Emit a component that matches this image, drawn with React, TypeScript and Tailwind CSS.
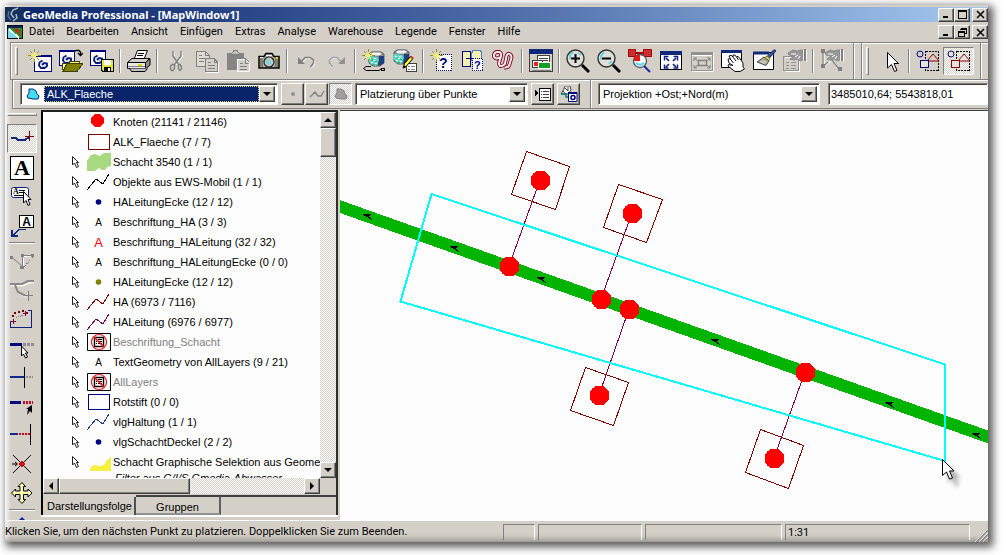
import React, { ReactNode } from "react";

const dither =
  "bg-[repeating-conic-gradient(#ffffff_0_25%,#d4d0c8_0_50%)] bg-[length:2px_2px]";
const raised =
  "border border-t-white border-l-white border-r-[#404040] border-b-[#404040] shadow-[inset_-1px_-1px_0_#808080]";
const sunken =
  "border border-t-[#808080] border-l-[#808080] border-r-white border-b-white shadow-[inset_1px_1px_0_#404040]";
const pushed = "border border-t-[#808080] border-l-[#808080] border-r-white border-b-white";

/* ---------- shared icon parts ---------- */

function Icon({ children, size = 24 }: { children: ReactNode; size?: number }) {
  return (
    <svg width={size} height={size} viewBox="0 0 24 24" fill="none" shapeRendering="crispEdges" aria-hidden="true">
      {children}
    </svg>
  );
}

function Swirl({ x, y }: { x: number; y: number }) {
  return (
    <g transform={`translate(${x} ${y})`} fill="none" shapeRendering="auto">
      <path d="M4.500 .5L1.500 2.500L1 5.500L3 8L6.500 8L9 6V3.500L6 3L4 5" stroke="#0a1a80" strokeWidth="1.900" />
      <path d="M2.500 2L4 4M5 6L7.500 6" stroke="#a0c8f0" strokeWidth=".9" />
    </g>
  );
}

function Star({ x, y }: { x: number; y: number }) {
  return (
    <g transform={`translate(${x} ${y})`}>
      <path d="M6.500 0V4M6.500 9V13M0 6.500H4M9 6.500H13M2 2L4 4M9 9L11 11M11 2L9 4M4 9L2 11" stroke="#909030" />
      <path d="M6.500 3V10M3 6.500H10M4 4L9 9M9 4L4 9" stroke="#f8f050" />
      <path d="M6 6h1v1h-1z" fill="#fff" />
    </g>
  );
}

function Pointing({ x = 0, y = 0 }: { x?: number; y?: number }) {
  return (
    <g transform={`translate(${x} ${y})`} shapeRendering="auto">
      <path d="M0 4L5 1L9 2L13 1H15V11L12 12L9 10L6 11L3 12L2 10L6 7L1 6Z" fill="#989898" stroke="#808080" strokeWidth=".8" />
      <path d="M3 5L8 5M7 8L10 6M10 10L12 7M2 12L5 12" stroke="#fff" />
      <path d="M16 0H18V12H16Z" fill="#808080" />
      <path d="M15.500 1V12M18.500 1V13" stroke="#fff" strokeWidth=".8" />
    </g>
  );
}

function Database({ x, y }: { x: number; y: number }) {
  return (
    <g transform={`translate(${x} ${y})`} shapeRendering="auto">
      <path d="M1 3L4 1H13L16 3V12L12 15H5L1 12Z" fill="#909898" stroke="#404850" strokeWidth=".8" />
      <path d="M11 5H16V12L12 14.500H10Z" fill="#1c3f80" />
      <path d="M2 3L5 1H12L15 3L11 5H5Z" fill="#f4f4f4" stroke="#606060" strokeWidth=".7" />
      <path d="M1 5L9 6L11 9L8 15L3 13L0 9Z" fill="#58dcd0" />
      <path d="M2 7.500H4M5 9.500H7M3 11.500H5M7 12.500H9M6 7.500H8" stroke="#ffffff" />
      <path d="M3 9.500H5M7 10.500H9M5 13.500H7" stroke="#30c040" />
    </g>
  );
}

const wavePath = "M8 8.500L5 9.500Q1.500 9 2 6T5.500 3H7.500Q9.500 4 9 7L7 14Q7 17.500 9.500 17T13 14.500L14.500 7Q15.500 4 17.500 5T19.500 8.500L17.500 15.500Q16.500 19 12.500 18.500";

/* ---------- standard toolbar icons ---------- */

function SelectMode({ inside }: { inside: boolean }) {
  return (
    <Icon>
      <path d="M9.500 2.500H22.500V21.500H9.500Z" stroke="#000" strokeDasharray="2 1" />
      <circle cx="4" cy="5" r="3" stroke="#000080" shapeRendering="auto" />
      <path d="M17 5L11 12H23Z" stroke="#900000" fill={inside ? "#e8e6e2" : "#d4d0c8"} shapeRendering="auto" />
      <path d="M4.500 11.500H12.500V18.500H4.500Z" fill="#e4e2dc" stroke={inside ? "#900000" : "#000080"} strokeWidth="1.500" />
    </Icon>
  );
}

const I = {
  newWorkspace: (
    <Icon>
      <path d="M6.500 6.500H23.500V22.500H6.500Z" fill="#fff" stroke="#000080" />
      <path d="M6 7H24" stroke="#000080" strokeWidth="2" />
      <Swirl x={10} y={11} />
      <Star x={0} y={0} />
    </Icon>
  ),
  open: (
    <Icon>
      <path d="M.5 1.500H15.500V16.500H.5Z" fill="#fff" stroke="#000080" />
      <path d="M0 2H16" stroke="#000080" strokeWidth="2" />
      <Swirl x={3} y={6} />
      <path d="M3.500 21V14.500H9L11 12.500H20V15" fill="#ffff80" stroke="#404000" />
      <path d="M8 14.500H24L18 22.500H4Z" fill="#808000" stroke="#404000" />
      <path d="M15 2.500L17 1.500H20L21.500 3V6M19 4L21.500 6.500L24 4" stroke="#000" shapeRendering="auto" strokeWidth="1.300" />
    </Icon>
  ),
  save: (
    <Icon>
      <path d="M.5 1.500H15.500V16.500H.5Z" fill="#fff" stroke="#000080" />
      <path d="M0 2H16" stroke="#000080" strokeWidth="2" />
      <Swirl x={3} y={6} />
      <path d="M11.500 10.500H23.500V22.500H13L11.500 21Z" fill="#e8e040" stroke="#000" />
      <path d="M14 11H21V16H14Z" fill="#fff" />
      <path d="M14 18H21V22H14Z" fill="#000" />
      <path d="M18 19H20V22H18Z" fill="#fff" />
    </Icon>
  ),
  print: (
    <svg width="24" height="24" viewBox="0 0 24 24" fill="none" aria-hidden="true">
      <path d="M7.500 9L10.500 1.500H20.500L17.500 9" fill="#fff" stroke="#000" />
      <path d="M11 4.500H17M10 6.500H16" stroke="#000" />
      <path d="M.5 13.500L5 9.500H22.500L18.500 13.500Z" fill="#d4d0c8" stroke="#000" />
      <path d="M.5 13.500H18.500V19.500H.5Z" fill="#e8e8e8" stroke="#000" />
      <path d="M18.500 13.500L23 9.500V16L18.500 20Z" fill="#909090" stroke="#000" />
      <path d="M1 17.500H18" stroke="#808080" />
      <path d="M11 16H15" stroke="#e8d800" strokeWidth="2" />
      <path d="M2.500 19.500L4.500 22.500H18L20.500 19.500" fill="#c0c0c0" stroke="#000" />
    </svg>
  ),
  cut: (
    <svg width="24" height="24" viewBox="0 0 24 24" fill="none" aria-hidden="true">
      <path d="M10 3V8L15 16M18 3V8L12 16" stroke="#fff" />
      <path d="M9 2V7L14.500 15M17 2V7L11 15" stroke="#808080" strokeWidth="1.400" />
      <path d="M8 15.500H10.500V19L9 21.500H7.500L6.500 20V17.500ZM14.500 15.500H16L17.500 17.500V20L16 21.500L14.500 19.500Z" stroke="#808080" strokeWidth="1.400" />
    </svg>
  ),
  copy: (
    <Icon>
      <path d="M1.500 2.500H10L14 6V17H1.500ZM10 2V6H14M4 6.500H7M4 9.500H11M4 12.500H9" stroke="#808080" fill="#dedbd5" />
      <path d="M10.500 9.500H19L22.500 13V22.500H10.500Z" fill="#d4d0c8" stroke="#808080" />
      <path d="M19 9V13H23M13 13.500H16M13 16.500H20M13 19.500H20" stroke="#808080" />
      <path d="M11 23.500H23.500V13" stroke="#fff" />
    </Icon>
  ),
  paste: (
    <Icon>
      <path d="M1 4H18V21H1Z" fill="#858585" />
      <path d="M5 5.500L8 1.500H11L14 5.500Z" fill="#c0c0c0" stroke="#808080" />
      <path d="M11.500 10.500H19L23.500 14V22.500H11.500Z" fill="#d4d0c8" stroke="#fff" />
      <path d="M11 9.500H19L23 13M19 10V14H23M14 14.500H17M14 17.500H21M14 20.500H21" stroke="#808080" />
    </Icon>
  ),
  camera: (
    <svg width="24" height="24" viewBox="0 0 24 24" fill="none" aria-hidden="true">
      <path d="M2 7.500H7L9 4.500H15L17 7.500H22V19H2Z" fill="#b0b0a8" stroke="#000" strokeWidth="1.500" />
      <path d="M3 9H6V18H3ZM18 9H21V18H18Z" fill="#808068" />
      <path d="M9 6.500H15M3 8.500H6" stroke="#fff" />
      <circle cx="12" cy="13" r="5" fill="#c8c8c8" stroke="#202020" strokeWidth="1.200" />
      <path d="M10 10L14 15M9 12.500L12 16" stroke="#60d8e8" strokeWidth="1.500" />
      <path d="M19 9H21" stroke="#e8d800" strokeWidth="2" />
    </svg>
  ),
  undo: (
    <svg width="24" height="24" viewBox="0 0 24 24" fill="none" aria-hidden="true">
      <path d="M8 14L12 9.500H17L20.500 12V16L17.500 19" stroke="#fff" />
      <path d="M7 13L11 8.500H16L19.500 11V14L16.500 18" stroke="#808080" strokeWidth="1.500" />
      <path d="M4 8V15H11Z" fill="#808080" />
    </svg>
  ),
  redo: (
    <svg width="24" height="24" viewBox="0 0 24 24" fill="none" aria-hidden="true">
      <path d="M16 14L12 9.500H8L4.500 12V15L7.500 19" stroke="#fff" />
      <path d="M16 13L12 8.500H8L4.500 11V14L7.500 18" stroke="#a0a0a0" strokeWidth="1.500" />
      <path d="M20 8V15H13Z" fill="#909090" />
    </svg>
  ),
  newConnection: (
    <Icon>
      <Database x={6} y={2} />
      <Star x={0} y={0} />
      <path d="M9 17.500H4L1.500 19.500L4 21.500H17L19 20L23 20" stroke="#000" shapeRendering="auto" />
      <path d="M19.500 19.500H22.500V21.500H19.500Z" fill="#c0c0c0" stroke="#000" />
    </Icon>
  ),
  editConnection: (
    <Icon>
      <Database x={0} y={0} />
      <path d="M13.500 14.500H23.500V22.500H13.500Z" fill="#fff" stroke="#404040" />
      <path d="M15 17.500H17M18 17.500H22M15 20.500H17M18 20.500H22" stroke="#808080" />
      <g shapeRendering="auto">
        <path d="M17.500 7.500L20 9.500L13.500 17L10 19L11.500 14.500Z" fill="#ffff30" stroke="#000" />
        <path d="M10 19.500L11.500 16.500L13.500 18Z" fill="#000" />
        <path d="M17.500 7.500L20 9.500" stroke="#c03020" strokeWidth="2" />
      </g>
    </Icon>
  ),
  newQuery: (
    <Icon>
      <path d="M6.500 5.500H21.500V21.500H6.500Z" fill="#fff" stroke="#000080" strokeDasharray="1 1" />
      <text x="9" y="19" fontSize="14" fontWeight="bold" fill="#000080" className="font-['Liberation_Sans',sans-serif]">?</text>
      <Star x={0} y={0} />
    </Icon>
  ),
  joinQuery: (
    <Icon>
      <path d="M1.500 2.500H9.500V17.500H1.500Z" fill="#f4f0b0" stroke="#000080" />
      <path d="M10.500 4.500L12 1.500H19L20.500 3V11H10.500Z" fill="#f4f0b0" stroke="#5080c0" />
      <path d="M11.500 9.500H21.500V21.500H11.500Z" fill="#fff" stroke="#000080" strokeDasharray="1 1" />
      <path d="M5 9.500H12" stroke="#000080" />
      <text x="13" y="20" fontSize="11" fontWeight="bold" fill="#000080" className="font-['Liberation_Sans',sans-serif]">?</text>
    </Icon>
  ),
  link: (
    <svg width="24" height="24" viewBox="0 0 24 24" fill="none" aria-hidden="true">
      <path d={wavePath} stroke="#800020" strokeWidth="3.800" />
      <path d={wavePath} stroke="#f0ece8" strokeWidth="2" />
    </svg>
  ),
  mapWindow: (
    <Icon>
      <path d="M.5 .5H23.500V22.500H.5Z" fill="#d4d0c8" stroke="#404040" />
      <path d="M0 0H24V5H0Z" fill="#102878" />
      <path d="M8.500 6.500H20.500V14H8.500Z" fill="#fff" stroke="#404040" />
      <path d="M10 9.500H19M10 11.500H19" stroke="#404040" />
      <path d="M3.500 11.500H13.500V18.500H3.500Z" fill="#fff" stroke="#404040" />
      <path d="M5 13H9V17H5Z" fill="#f02020" />
      <path d="M9.500 13.500H21.500V19.500H9.500Z" fill="#10a020" stroke="#fff" />
      <path d="M3 21H22" stroke="#808080" />
    </Icon>
  ),
  zoomIn: (
    <svg width="24" height="24" viewBox="0 0 24 24" fill="none" aria-hidden="true">
      <circle cx="9.500" cy="9.500" r="8.500" stroke="#303030" strokeWidth="1.400" fill="#e0ded8" />
      <path d="M4 10V6L7 3M12 4L15 6" stroke="#40d8e8" strokeWidth="1.500" />
      <path d="M9.500 5V14M5 9.500H14" stroke="#000" strokeWidth="2" />
      <path d="M16 16L23 23" stroke="#000" strokeWidth="3" />
    </svg>
  ),
  zoomOut: (
    <svg width="24" height="24" viewBox="0 0 24 24" fill="none" aria-hidden="true">
      <circle cx="9.500" cy="9.500" r="8.500" stroke="#303030" strokeWidth="1.400" fill="#e0ded8" />
      <path d="M4 11V7L7 3M12 15L15 12" stroke="#40d8e8" strokeWidth="1.500" />
      <path d="M5 9.500H14" stroke="#000" strokeWidth="2" />
      <path d="M16 16L23 23" stroke="#000" strokeWidth="3" />
    </svg>
  ),
  fitSelect: (
    <svg width="24" height="24" viewBox="0 0 24 24" fill="none" aria-hidden="true">
      <path d="M.5 .5H7.500V7.500H.5ZM15.500 .5H23.500V7.500H15.500Z" fill="#d83030" stroke="#a00000" />
      <path d="M8 4H15" stroke="#a00000" strokeWidth="2" />
      <path d="M2 3H6M18 3H22M2 5H6M18 5H22" stroke="#903030" strokeDasharray="1 1" />
      <circle cx="12" cy="12" r="6.500" fill="#fff" stroke="#505060" strokeWidth="1.300" />
      <path d="M6 12V9L9 6H12V12Z" fill="#e81818" />
      <path d="M8 14Q12 17.500 16 14" stroke="#50d8e8" strokeWidth="2" />
      <path d="M16 17L22 23" stroke="#1030a0" strokeWidth="2" />
    </svg>
  ),
  fitAll: (
    <Icon>
      <path d="M1.500 2.500H22.500V20.500H1.500Z" fill="#fff" stroke="#000" />
      <path d="M1 4H23" stroke="#102878" strokeWidth="4" />
      <g stroke="#102080" shapeRendering="auto">
        <path d="M7 9L10 12M17 9L14 12M7 18L10 15M17 18L14 15" strokeWidth="1.700" />
        <path d="M5.500 11.500V7.500H9.500M14.500 7.500H18.500V11.500M5.500 15.500V19H9.500M14.500 19H18.500V15.500" strokeWidth="1.500" />
      </g>
    </Icon>
  ),
  fitGray: (
    <Icon>
      <path d="M1.500 3.500H22.500V21.500H1.500Z" fill="#d4d0c8" stroke="#909090" strokeWidth="1.500" />
      <path d="M1 4H23" stroke="#909090" strokeWidth="3" />
      <path d="M2 6.500H22M23.500 4V22.500H2" stroke="#fff" />
      <g stroke="#808080" shapeRendering="auto">
        <path d="M8.500 11.500H16.500V16.500H8.500Z" strokeWidth="1.400" />
        <path d="M4 12V9H7M17 9H20V12M4 16V19H7M17 19H20V16M4 9L8 12M20 9L17 12M4 19L8 16M20 19L17 16" />
      </g>
    </Icon>
  ),
  pan: (
    <svg width="24" height="24" viewBox="0 0 24 24" fill="none" aria-hidden="true">
      <path d="M.5 1.500H20.500V18.500H.5Z" fill="#fff" stroke="#000" />
      <path d="M0 2.500H21" stroke="#102878" strokeWidth="3" />
      <path d="M8 14L7 10Q9 9 10 11L8 7Q10 5 12 8L12 6Q14 5 15.500 8Q17 6 18.500 9L22 14V18L23.500 20L19 22.500H14L7 17L7.500 15.500L12 16.500Z" fill="#fff" stroke="#101010" />
      <path d="M12 8L15 12M15.500 8L17.500 11M10 11L12.500 14" stroke="#101010" />
    </svg>
  ),
  brush: (
    <svg width="24" height="24" viewBox="0 0 24 24" fill="none" aria-hidden="true">
      <path d="M1.500 3.500H21.500V20.500H1.500Z" fill="#fff" stroke="#000" />
      <path d="M1 4H17" stroke="#102878" strokeWidth="3" />
      <path d="M21.500 1H23.500V2.500L17.500 9L15 7.500Z" fill="#3058a8" stroke="#101840" strokeWidth=".8" />
      <path d="M15 7L18 9.500L16.500 12L12.500 9Z" fill="#e8d840" stroke="#606020" strokeWidth=".8" />
      <path d="M12 8L17 12L14 16.500L5 13Z" fill="#a8a898" stroke="#404040" strokeWidth=".9" />
      <path d="M8 12.500L13 14.500M10 11.500L14.500 13.500" stroke="#e8e8e0" strokeWidth=".8" />
    </svg>
  ),
  properties: (
    <Icon>
      <path d="M.5 7.500H15.500V21.500H.5Z" stroke="#909090" fill="#d4d0c8" />
      <path d="M16.500 8V22.500H2M2 8.500H14" stroke="#fff" />
      <path d="M3 13.500H6M8 13.500H13M3 16.500H6M8 16.500H13M3 19.500H6M8 19.500H13" stroke="#909090" />
      <Pointing x={5} />
    </Icon>
  ),
  geometry: (
    <Icon>
      <g shapeRendering="auto">
        <path d="M4 3V18L12 11L21 22" stroke="#fff" strokeWidth="1.200" />
        <path d="M3 2V18L11 10L20 21" stroke="#808080" strokeWidth="1.200" />
      </g>
      <path d="M1 15H5V19H1ZM18 18H22V22H18ZM1 0H5V4H1Z" fill="#808080" />
      <Pointing x={5} />
    </Icon>
  ),
  select: (
    <svg width="24" height="24" viewBox="0 0 24 24" fill="none" aria-hidden="true">
      <path d="M8.500 3.500V19L12.500 15.500L15.500 22.500L18 21.500L15 14.500H19.500Z" fill="#fff" stroke="#000" />
    </svg>
  ),
  insideA: <SelectMode inside={false} />,
  insideB: <SelectMode inside />,
};

/* ---------- drawing palette icons ---------- */

const P = {
  digitize: (
    <Icon>
      <path d="M1 11H6L8 13H15L19 10" stroke="#102880" strokeWidth="2" />
      <path d="M19.500 4V14M15 9.500H24" stroke="#800000" />
    </Icon>
  ),
  text: (
    <Icon>
      <path d="M.5 .5H23.500V23.500H.5Z" fill="#fff" stroke="#000" />
      <text x="12" y="19" textAnchor="middle" fontSize="22" fontWeight="bold" fill="#000" className="font-['Liberation_Serif',serif]">A</text>
    </Icon>
  ),
  label: (
    <svg width="24" height="24" viewBox="0 0 24 24" fill="none" aria-hidden="true">
      <rect x="1.500" y="2.500" width="17" height="10" rx="2" fill="#fff" stroke="#102080" />
      <text x="3" y="9" fontSize="8" fontWeight="bold" fill="#000" className="font-['Liberation_Serif',serif]">A</text>
      <path d="M9 5.500H15M9 7.500H15M4 10.500H14" stroke="#000" />
      <path d="M13.500 6.500V18L16 15.500L18 20.500L20 19.500L18 14.500H21Z" fill="#fff" stroke="#000" />
    </svg>
  ),
  leader: (
    <Icon>
      <path d="M9.500 1.500H23.500V13.500H9.500Z" fill="#fff" stroke="#000" />
      <text x="16.500" y="12" textAnchor="middle" fontSize="12" fontWeight="bold" fill="#000" className="font-['Liberation_Sans',sans-serif]">A</text>
      <path d="M16 15.500H9L3 21M2 16V22H8" stroke="#102880" strokeWidth="1.500" />
    </Icon>
  ),
  angle: (
    <Icon>
      <path d="M1.500 8L12.500 17.500V6.500H22" stroke="#808080" shapeRendering="auto" />
      <path d="M14 18L23 8" stroke="#808080" strokeDasharray="1 1" />
      <path d="M0 7H3V10H0ZM10 17H14V20H10ZM11 5H14V8H11ZM21 5H24V8H21Z" fill="#808080" />
      <path d="M13.500 8V17M14 7.500H21" stroke="#fff" />
    </Icon>
  ),
  curve: (
    <svg width="24" height="24" viewBox="0 0 24 24" fill="none" aria-hidden="true">
      <path d="M1 7.500H13L20 4.500H24M6 9L9 15L16 19" stroke="#fff" strokeWidth="1.500" />
      <path d="M0 6H12L18 3H24M5 7L8 14L15 17.500" stroke="#888888" strokeWidth="2" />
      <path d="M18.500 13V23M14 17.500H23" stroke="#808080" />
    </svg>
  ),
  area: (
    <Icon>
      <path d="M3 14.500H.5V20.500H21.500V3.500H18" stroke="#102080" />
      <path d="M2 8H4V10H2ZM4 5H6V7H4ZM8 4H10V6H8ZM12 3H14V5H12ZM16 5H18V7H16Z" fill="#700010" />
      <path d="M1 14.500H6M3.500 12V17M13 6.500H18M15.500 4V9" stroke="#800040" />
      <path d="M6 11L13 8" stroke="#808080" strokeDasharray="1 1" />
    </Icon>
  ),
  extend: (
    <Icon>
      <path d="M0 8.500H12" stroke="#000080" strokeWidth="3" />
      <path d="M13 8.500H24" stroke="#909090" strokeWidth="3" strokeDasharray="3 1" />
      <path d="M11.500 10V20L13.500 18L15.500 22L17.500 21L15.500 17H18Z" fill="#fff" stroke="#000" shapeRendering="auto" />
    </Icon>
  ),
  trim: (
    <Icon>
      <path d="M0 12H14" stroke="#102890" strokeWidth="2" />
      <path d="M14.500 2V23" stroke="#000" />
      <path d="M16 12H23" stroke="#909090" strokeWidth="2" strokeDasharray="2 1" />
    </Icon>
  ),
  extendRed: (
    <Icon>
      <path d="M0 8.500H11" stroke="#000080" strokeWidth="3" />
      <path d="M13 8.500H23" stroke="#d00020" strokeWidth="3" strokeDasharray="2 1" />
      <path d="M16 15L22 11V19L20 17L17 21L18 15Z" fill="#000" shapeRendering="auto" />
    </Icon>
  ),
  meet: (
    <Icon>
      <path d="M0 11H8" stroke="#102890" strokeWidth="2" />
      <path d="M9 11H20" stroke="#d00020" strokeWidth="2" strokeDasharray="2 1" />
      <path d="M20.500 1V22" stroke="#000" />
    </Icon>
  ),
  intersect: (
    <svg width="24" height="24" viewBox="0 0 24 24" fill="none" aria-hidden="true">
      <path d="M3 3L21 21M21 3L3 21M2 12H7M5 10L7.500 12L5 14" stroke="#000" />
      <path d="M12 9V15M9 12H15" stroke="#ff0000" strokeWidth="2" />
    </svg>
  ),
  move: (
    <svg width="24" height="24" viewBox="0 0 24 24" fill="none" aria-hidden="true">
      <path d="M12 1.500L15.500 5.500H13.500V10H18V8L22 12L18 16V13.500H13.500V18.500H15.500L12 22.500L8 18.500H10V13.500H5.500V16L1.500 12L5.500 8V10H10V5.500H8Z" fill="#fcfcb0" stroke="#000" />
    </svg>
  ),
};

const ArrowIcon = ({ dir }: { dir: "up" | "down" | "left" | "right" }) => {
  const d = {
    up: "M0 6L4 2L8 6Z",
    down: "M0 2H8L4 6Z",
    left: "M6 0V8L2 4Z",
    right: "M2 0V8L6 4Z",
  }[dir];
  return (
    <svg width="8" height="8" viewBox="0 0 8 8" aria-hidden="true">
      <path d={d} fill="#000" />
    </svg>
  );
};

/* ---------- toolbar parts ---------- */

function Tool({ label, pressed, children }: { label: string; pressed?: boolean; children: ReactNode }) {
  return (
    <button
      aria-label={label}
      className={`flex h-7 w-[31px] shrink-0 items-center justify-center ${pressed ? `${dither} ${pushed}` : ""}`}
    >
      {children}
    </button>
  );
}

function Sep() {
  return (
    <div className="flex w-1.5 shrink-0 justify-center">
      <div className="h-6 w-0.5 border-r border-l border-r-white border-l-[#808080]" />
    </div>
  );
}

function Grip() {
  return <div className="mr-1.5 ml-1 h-7 w-[3px] shrink-0 border border-t-white border-r-[#808080] border-b-[#808080] border-l-white" />;
}

function SmallButton({ label, pressed, children }: { label: string; pressed?: boolean; children: ReactNode }) {
  return (
    <button
      aria-label={label}
      className={`flex h-[22px] w-[23px] shrink-0 items-center justify-center ${pressed ? `${dither} ${pushed}` : raised}`}
    >
      {children}
    </button>
  );
}

function Combo({ label, value, width, active, icon }: { label: string; value: string; width: string; active?: boolean; icon?: ReactNode }) {
  return (
    <div className={`flex h-[22px] shrink-0 items-center bg-white p-0.5 ${sunken} ${width}`}>
      {icon}
      <select
        aria-label={label}
        className={`h-4 min-w-0 flex-1 appearance-none px-0.5 py-0 text-[11px] outline-none ${
          active
            ? "border border-dotted border-[#e0d070] bg-[#0a246a] leading-3.5 text-white"
            : "bg-white leading-4 text-black"
        }`}
      >
        <option>{value}</option>
      </select>
      <span className={`flex size-4 shrink-0 items-center justify-center bg-[#d4d0c8] ${raised}`}>
        <ArrowIcon dir="down" />
      </span>
    </div>
  );
}

function CaptionButton({ label, children }: { label: string; children: ReactNode }) {
  return (
    <button aria-label={label} className={`flex h-3.5 w-4 shrink-0 items-center justify-center bg-[#d4d0c8] ${raised}`}>
      <svg width="9" height="9" viewBox="0 0 9 9" fill="none" stroke="#000" shapeRendering="crispEdges" aria-hidden="true">
        {children}
      </svg>
    </button>
  );
}

function CaptionButtons({ restore }: { restore?: boolean }) {
  return (
    <div className="flex shrink-0 items-center">
      <CaptionButton label="Minimieren">
        <path d="M1 7H6" strokeWidth="2" />
      </CaptionButton>
      <CaptionButton label={restore ? "Wiederherstellen" : "Maximieren"}>
        {restore ? (
          <path d="M2.500 .5H8.500V5.500H6M2 1.500H9M.5 3.500H6.500V8.500H.5ZM0 4.500H7" />
        ) : (
          <path d="M.5 .5H8.500V8.500H.5ZM0 1.500H9" />
        )}
      </CaptionButton>
      <div className="w-0.5" />
      <CaptionButton label="Schließen">
        <path d="M1 1L8 8M8 1L1 8" strokeWidth="1.500" shapeRendering="auto" />
      </CaptionButton>
    </div>
  );
}

/* ---------- legend ---------- */

const zigzag = (color: string) => (
  <svg width="24" height="18" viewBox="0 0 24 18" fill="none" shapeRendering="crispEdges" aria-hidden="true">
    <path d="M0 17L9 6L16 11L22 1" stroke={color} />
  </svg>
);
const dot = (color: string) => (
  <svg width="24" height="18" viewBox="0 0 24 18" aria-hidden="true">
    <circle cx="11.500" cy="9" r="2.800" fill={color} />
  </svg>
);
const box = (color: string) => (
  <svg width="24" height="18" viewBox="0 0 24 18" fill="none" shapeRendering="crispEdges" aria-hidden="true">
    <path d="M1.500 1.500H22.500V16.500H1.500Z" stroke={color} />
  </svg>
);
const letter = (color: string, size: number) => (
  <svg width="24" height="18" viewBox="0 0 24 18" aria-hidden="true">
    <text x="11.500" y={size > 10 ? 14 : 13} textAnchor="middle" fontSize={size} fill={color} className="font-['Liberation_Sans',sans-serif]">
      A
    </text>
  </svg>
);
const hidden = (
  <svg width="24" height="18" viewBox="0 0 24 18" fill="none" aria-hidden="true">
    <path d="M.5 .5H23.500V17.500H.5Z" fill="#fff" stroke="#000" />
    <path d="M7.500 4.500H16.500V13.500H7.500Z" fill="#fff" stroke="#000" strokeWidth="1.400" />
    <path d="M9 6.500H10M11 6.500H15M9 8.500H10M11 8.500H15M9 10.500H10M11 10.500H15" stroke="#000" />
    <circle cx="12" cy="9" r="7.500" stroke="#e81818" strokeWidth="1.200" />
    <path d="M7 4L17 14" stroke="#e81818" strokeWidth="1.600" />
  </svg>
);

type Entry = { name: string; symbol: ReactNode; locate?: boolean; muted?: boolean };

const entries: Entry[] = [
  {
    name: "Knoten (21141 / 21146)",
    locate: false,
    symbol: (
      <svg width="24" height="18" viewBox="0 0 24 18" aria-hidden="true">
        <path d="M8 1H13L17 5V10L13 14H8L4 10V5Z" fill="#ff0000" />
      </svg>
    ),
  },
  { name: "ALK_Flaeche (7 / 7)", locate: false, symbol: box("#800000") },
  {
    name: "Schacht 3540 (1 / 1)",
    symbol: (
      <svg width="24" height="18" viewBox="0 0 24 18" aria-hidden="true">
        <path d="M0 8L4 2L8 1L13 3L17 0H24V13L20 14L18 17L15 17L12 15L8 18L0 18Z" fill="#a8d880" />
      </svg>
    ),
  },
  { name: "Objekte aus EWS-Mobil (1 / 1)", symbol: zigzag("#000000") },
  { name: "HALeitungEcke (12 / 12)", symbol: dot("#000080") },
  { name: "Beschriftung_HA (3 / 3)", symbol: letter("#000000", 10) },
  { name: "Beschriftung_HALeitung (32 / 32)", symbol: letter("#ff0000", 13) },
  { name: "Beschriftung_HALeitungEcke (0 / 0)", symbol: letter("#000000", 10) },
  { name: "HALeitungEcke (12 / 12)", symbol: dot("#808000") },
  { name: "HA (6973 / 7116)", symbol: zigzag("#800000") },
  { name: "HALeitung (6976 / 6977)", symbol: zigzag("#800040") },
  { name: "Beschriftung_Schacht", muted: true, symbol: hidden },
  { name: "TextGeometry von AllLayers (9 / 21)", symbol: letter("#000000", 10) },
  { name: "AllLayers", muted: true, symbol: hidden },
  { name: "Rotstift (0 / 0)", symbol: box("#000080") },
  { name: "vlgHaltung (1 / 1)", symbol: zigzag("#204080") },
  { name: "vlgSchachtDeckel (2 / 2)", symbol: dot("#000080") },
  {
    name: "Schacht Graphische Selektion aus Geomedia",
    symbol: (
      <svg width="24" height="18" viewBox="0 0 24 18" aria-hidden="true">
        <path d="M3 18V15L7 12L13 13L17 12L20 7L24 4V18Z" fill="#f8f040" />
      </svg>
    ),
  },
];

function LegendRow({ entry }: { entry: Entry }) {
  return (
    <li className="flex h-5 items-center whitespace-nowrap">
      <span className="flex w-11 shrink-0 justify-end pr-[7px]">
        {entry.locate !== false && (
          <svg width="9" height="14" viewBox="0 0 9 14" fill="#fff" stroke="#202020" aria-hidden="true">
            <path d="M1.500 1.500V10L3.500 8L5.500 12.500L7.500 11.500L5.500 7.500H7.500Z" />
          </svg>
        )}
      </span>
      <span className="shrink-0">{entry.symbol}</span>
      <span className={`pl-0.5 ${entry.muted ? "text-[#808080]" : "text-black"}`}>{entry.name}</span>
    </li>
  );
}

function Legend() {
  return (
    <aside className="flex w-[299px] shrink-0 flex-col pr-0.5">
      <div className="flex min-h-0 flex-1 flex-col border-t-2 border-r-2 border-l-2 border-t-[#202020] border-r-[#303030] border-l-black">
        <div className="flex min-h-0 flex-1 bg-[#fdfdfd]">
          <ul className="min-w-0 flex-1 overflow-hidden">
            {entries.map((e, i) => (
              <LegendRow key={i} entry={e} />
            ))}
            <li className="pl-[72px] leading-3 whitespace-nowrap italic">Filter aus G/I/S Gmedia-Abwasser</li>
          </ul>
          <div className={`flex w-4 shrink-0 flex-col ${dither}`}>
            <button aria-label="Nach oben" className={`flex size-4 items-center justify-center bg-[#d4d0c8] ${raised}`}>
              <ArrowIcon dir="up" />
            </button>
            <div className={`h-[29px] bg-[#d4d0c8] ${raised}`} />
            <div className="flex-1" />
            <button aria-label="Nach unten" className={`flex size-4 items-center justify-center bg-[#d4d0c8] ${raised}`}>
              <ArrowIcon dir="down" />
            </button>
          </div>
        </div>
        <div className="flex h-4 shrink-0 pr-4">
          <div className={`flex flex-1 ${dither}`}>
            <button aria-label="Nach links" className={`flex size-4 items-center justify-center bg-[#d4d0c8] ${raised}`}>
              <ArrowIcon dir="left" />
            </button>
            <div className={`w-[131px] bg-[#d4d0c8] ${raised}`} />
            <div className="flex-1" />
            <button aria-label="Nach rechts" className={`flex size-4 items-center justify-center bg-[#d4d0c8] ${raised}`}>
              <ArrowIcon dir="right" />
            </button>
          </div>
        </div>
        <div className="flex h-[3px] shrink-0">
          <div className="w-[93px]" />
          <div className="flex-1 border-b-2 border-[#404040]" />
        </div>
        <div className="flex h-[18px] shrink-0 text-center">
          <button className="w-[93px] border-r-2 border-[#505050] pl-0.5 whitespace-nowrap">Darstellungsfolge</button>
          <button className="w-[85px] border-r-2 border-b-2 border-[#606060] border-b-[#909090] pt-0.5">Gruppen</button>
        </div>
      </div>
      <div className="h-[5px] border-t-2 border-white" />
    </aside>
  );
}

/* ---------- map ---------- */

const squares = [
  "526.5,151.5 569.5,166.5 555.5,209.5 511.5,194.5",
  "618.5,184.5 662.5,199.5 646.5,242.5 603.5,227.5",
  "585.5,367.5 628.5,382.5 613.5,425.5 570.5,410.5",
  "760.5,429.5 803.5,445.5 788.5,488.5 745.5,472.5",
];
const laterals = [
  [540, 180, 509, 266],
  [632, 213, 601, 299],
  [629, 309, 599, 395],
  [805, 372, 774, 458],
];
const flow = [
  [367, 215],
  [454, 247],
  [541, 278],
  [715, 340],
  [889, 403],
  [976, 434],
];

function MapView() {
  return (
    <main className="min-w-0 flex-1 border-t border-[#404040] bg-[#fdfdfd]">
      <svg className="block h-full w-full" viewBox="340 111 648 409" preserveAspectRatio="xMinYMin slice" shapeRendering="crispEdges" fill="none" role="img" aria-label="Karte">
        <path d="M330 203L998 440.500" stroke="#00b400" strokeWidth="12" />
        {flow.map(([x, y]) => (
          <path key={x} d={`M${x - 5} ${y - 1}L${x + 5} ${y - 1}L${x + 2} ${y + 1}L${x + 5} ${y + 5}Z`} fill="#000" />
        ))}
        {squares.map((p) => (
          <polygon key={p} points={p} stroke="#800000" />
        ))}
        {laterals.map(([x1, y1, x2, y2]) => (
          <g key={x1}>
            <line x1={x1} y1={y1} x2={x2} y2={y2} stroke="#800040" />
            {[
              [x1, y1],
              [x2, y2],
            ].map(([x, y]) => (
              <path
                key={x}
                transform={`translate(${x + 0.5} ${y + 0.5})`}
                d="M-4 -9.500H4L7 -7L9.500 -4V4L7 7L4 9.500H-4L-7 7L-9.500 4V-4L-7 -7Z"
                fill="#ff0000"
              />
            ))}
          </g>
        ))}
        <path d="M431.500 194L945 364.500V461L400.500 301.500Z" stroke="#00ffff" strokeWidth="2" />
        <g shapeRendering="auto">
          <path d="M948 465V483L952 479L956 487L959 485L956 478H961Z" fill="#000" opacity=".3" className="blur-[2px]" />
          <path d="M942.500 459.500V475.500L946.500 472L949.500 479L952.500 478L949.500 471H954Z" fill="#fff" stroke="#000" />
        </g>
      </svg>
    </main>
  );
}

/* ---------- window ---------- */

const menus = ["Datei", "Bearbeiten", "Ansicht", "Einfügen", "Extras", "Analyse", "Warehouse", "Legende", "Fenster", "Hilfe"];

function StatusPane({ className, children }: { className: string; children?: ReactNode }) {
  return (
    <div className={`ml-[3px] h-4 shrink-0 border-t border-r border-l border-t-[#808080] border-r-white border-l-[#808080] ${className}`}>{children}</div>
  );
}

function PaletteRule() {
  return (
    <div className="flex h-1.5 w-full shrink-0 items-center px-1">
      <div className="h-0.5 w-full border-t border-b border-t-[#808080] border-b-white" />
    </div>
  );
}

export default function App() {
  return (
    <div className="h-screen bg-white pt-[5px] pr-[18px] pb-[13px] pl-[5px] font-['Liberation_Sans',Arial,sans-serif] text-[11px] text-black">
      <div className="flex h-full flex-col overflow-hidden bg-[linear-gradient(to_right,#f8f8f6_0,#d4d0c8_6px)] shadow-[3px_3px_8px_2px_rgba(0,0,0,0.65)]">
        <header className="mt-0.5 flex h-[15px] shrink-0 items-center bg-linear-to-r from-[#0a246a] via-[#4d6ba8] to-[#a6caf0]">
          <svg width="18" height="15" viewBox="0 0 18 15" fill="none" aria-hidden="true">
            <path d="M0 0H18V15H0Z" fill="#183058" />
            <path d="M13 1L8 3L6 7L9 11M8 14L12 11L11 7" stroke="#a0b8d8" strokeWidth="1.500" />
            <path d="M4 4L3 9L6 13" stroke="#507098" strokeWidth="1.500" />
          </svg>
          <h1 className="flex-1 font-['Noto_Sans',sans-serif] text-[11px] leading-[15px] font-bold whitespace-nowrap text-white">
            GeoMedia Professional - [MapWindow1]
          </h1>
          <CaptionButtons />
        </header>

        <nav className="flex h-5 shrink-0 items-center font-['Roboto',sans-serif]">
          <svg className="ml-0.5" width="16" height="14" viewBox="0 0 16 14" fill="none" shapeRendering="crispEdges" aria-hidden="true">
            <path d="M.5 .5H15.500V13.500H.5Z" fill="#10a020" stroke="#000" />
            <path d="M1 1H15V3H1Z" fill="#102060" />
            <path d="M1 4L10 13H1Z" fill="#80d8f0" />
            <path d="M2 4L12 13" stroke="#fff" strokeWidth="2" />
            <path d="M7 4L14 10M9 4L14 7" stroke="#d02020" strokeWidth="1.500" />
          </svg>
          <div className="flex flex-1 items-center">
            {menus.map((m) => (
              <button key={m} className="px-1.5 leading-4 whitespace-nowrap">
                {m}
              </button>
            ))}
          </div>
          <CaptionButtons restore />
        </nav>

        <div className="ml-[5px] flex h-[38px] shrink-0 items-center overflow-hidden border-t border-b border-l border-[#808080] shadow-[inset_1px_1px_0_#fff]" role="toolbar">
          <Grip />
          <Tool label="Neuer GeoWorkspace">{I.newWorkspace}</Tool>
          <Tool label="Öffnen">{I.open}</Tool>
          <Tool label="Speichern">{I.save}</Tool>
          <Sep />
          <Tool label="Drucken">{I.print}</Tool>
          <Sep />
          <Tool label="Ausschneiden">{I.cut}</Tool>
          <Tool label="Kopieren">{I.copy}</Tool>
          <Tool label="Einfügen">{I.paste}</Tool>
          <Tool label="Schnappschuss">{I.camera}</Tool>
          <Sep />
          <Tool label="Rückgängig">{I.undo}</Tool>
          <Tool label="Wiederholen">{I.redo}</Tool>
          <Sep />
          <Tool label="Neue Verbindung">{I.newConnection}</Tool>
          <Tool label="Verbindung bearbeiten">{I.editConnection}</Tool>
          <Sep />
          <Tool label="Neue Abfrage">{I.newQuery}</Tool>
          <Tool label="Verknüpfung">{I.joinQuery}</Tool>
          <Tool label="Anhängen">{I.link}</Tool>
          <Sep />
          <Tool label="Kartenfenster">{I.mapWindow}</Tool>
          <Sep />
          <Tool label="Vergrößern">{I.zoomIn}</Tool>
          <Tool label="Verkleinern">{I.zoomOut}</Tool>
          <Tool label="Auswahl einpassen">{I.fitSelect}</Tool>
          <Tool label="Alles einpassen">{I.fitAll}</Tool>
          <Tool label="Vorherige Ansicht">{I.fitGray}</Tool>
          <Tool label="Verschieben">{I.pan}</Tool>
          <Tool label="Aktualisieren">{I.brush}</Tool>
          <Tool label="Eigenschaften">{I.properties}</Tool>
          <Sep />
          <Tool label="Geometrie bearbeiten">{I.geometry}</Tool>
          <div className="ml-1.5 h-full w-[9px] shrink-0 border-r border-l border-[#808080] shadow-[inset_1px_0_0_#fff,1px_0_0_#fff]" />
          <Grip />
          <Tool label="Auswählen">{I.select}</Tool>
          <Sep />
          <Tool label="Überlappend">{I.insideA}</Tool>
          <Tool label="Innerhalb" pressed>{I.insideB}</Tool>
          <div className="ml-1.5 h-full w-0.5 shrink-0 border-r border-l border-r-white border-l-[#808080]" />
        </div>

        <div className="ml-[7px] flex h-[29px] shrink-0 items-center overflow-hidden border-b border-l border-[#808080] pl-[7px] shadow-[inset_1px_1px_0_#fff]" role="toolbar">
          <Combo
            label="Objektklasse"
            value="ALK_Flaeche"
            width="w-[258px]"
            active
            icon={
              <svg className="mr-1 ml-[3px] shrink-0" width="14" height="12" viewBox="0 0 14 12" aria-hidden="true">
                <path d="M3 1H7L10 3L11 6L13 8L12 11H7L2 10L1 8L3 5Z" fill="#40e0f0" stroke="#102080" />
              </svg>
            }
          />
          <div className="ml-[3px] flex items-center gap-px">
            <SmallButton label="Punkt">
              <svg width="4" height="4" viewBox="0 0 4 4" aria-hidden="true"><circle cx="2" cy="2" r="2" fill="#909090" /></svg>
            </SmallButton>
            <SmallButton label="Linie">
              <svg width="16" height="8" viewBox="0 0 16 8" fill="none" aria-hidden="true"><path d="M1 7L6 2L9 6H12L15 1" stroke="#808080" strokeWidth="1.300" /></svg>
            </SmallButton>
            <SmallButton label="Fläche" pressed>
              <svg width="14" height="12" viewBox="0 0 14 12" aria-hidden="true"><path d="M3 1H7L10 3L11 6L13 8L12 11H7L2 10L1 8L3 5Z" fill="#a0a0a0" stroke="#808080" /></svg>
            </SmallButton>
          </div>
          <div className="w-[3px] shrink-0" />
          <Combo label="Platzierungsmethode" value="Platzierung über Punkte" width="w-[173px]" />
          <div className="ml-[3px] flex items-center gap-[3px]">
            <SmallButton label="Optionen">
              <svg width="16" height="14" viewBox="0 0 16 14" fill="none" shapeRendering="crispEdges" aria-hidden="true">
                <path d="M4.500 1.500H15.500V13.500H4.500Z" fill="#fff" stroke="#000" />
                <path d="M6 4.500H7M8 4.500H14M6 7.500H7M8 7.500H14M6 10.500H7M8 10.500H14" stroke="#404040" />
                <path d="M0 3V9L3 6Z" fill="#000" />
              </svg>
            </SmallButton>
            <SmallButton label="Attribute">
              <svg width="18" height="16" viewBox="0 0 18 16" fill="none" aria-hidden="true">
                <path d="M1 8L4 3L5 0H10L11 4L8 8ZM3 5L6 8M5 2L8 5M8 1V5" fill="#fff" stroke="#404040" />
                <path d="M1 8H6V11H9" stroke="#008080" strokeWidth="1.500" />
                <path d="M8.500 6.500H17V15.500H8.500Z" fill="#fff" stroke="#000080" />
                <path d="M8 7H17" stroke="#000080" strokeWidth="2" />
                <circle cx="13" cy="11.500" r="2" stroke="#000080" strokeWidth="1.500" />
              </svg>
            </SmallButton>
          </div>
          <div className="mr-1.5 ml-2.5 h-full w-0.5 shrink-0 border-r border-l border-r-white border-l-[#808080]" />
          <Combo label="Projektion" value="Projektion +Ost;+Nord(m)" width="w-[222px]" />
          <input
            aria-label="Koordinaten"
            defaultValue="3485010,64; 5543818,01"
            className={`ml-2 h-[22px] min-w-0 flex-1 bg-white px-0.5 text-[11px] leading-4 outline-none ${sunken}`}
          />
        </div>

        <div className="flex min-h-0 flex-1 pt-px">
          <div className="flex w-9 shrink-0 flex-col items-center overflow-hidden pr-0.5" role="toolbar">
            <div className="mt-[3px] mb-2 h-[3px] w-[30px] shrink-0 border border-t-white border-r-[#808080] border-b-[#808080] border-l-white" />
            {Object.entries(P).map(([name, icon], i) => (
              <React.Fragment key={name}>
                {i === 4 && <PaletteRule />}
                <button
                  aria-label={name}
                  className={`flex h-[29px] w-[30px] shrink-0 items-center justify-center ${i === 0 ? `${dither} ${pushed}` : ""}`}
                >
                  {icon}
                </button>
              </React.Fragment>
            ))}
            <PaletteRule />
            <svg className="mt-1 shrink-0" width="24" height="24" viewBox="0 0 24 24" aria-hidden="true">
              <path d="M12 0L18 6H6Z" fill="#102890" />
            </svg>
          </div>
          <Legend />
          <MapView />
        </div>

        <footer className="flex h-[22px] shrink-0 items-center border-t border-white font-['Roboto',sans-serif] shadow-[inset_0_-6px_6px_-4px_rgba(0,0,0,0.35)]">
          <p className="min-w-0 flex-1 overflow-hidden leading-4 whitespace-nowrap">
            Klicken Sie, um den nächsten Punkt zu platzieren. Doppelklicken Sie zum Beenden.
          </p>
          <StatusPane className="w-8" />
          <StatusPane className="w-[104px]" />
          <StatusPane className="w-[137px]" />
          <StatusPane className="w-[185px] pl-0.5 leading-[15px]">1:31</StatusPane>
          <svg className="ml-1 self-end" width="14" height="14" viewBox="0 0 14 14" aria-hidden="true">
            <path d="M2 14L14 2M6 14L14 6M10 14L14 10" stroke="#808080" strokeWidth="1.500" />
            <path d="M1 14L14 1M5 14L14 5M9 14L14 9" stroke="#fff" strokeWidth=".7" />
          </svg>
        </footer>
      </div>
    </div>
  );
}
